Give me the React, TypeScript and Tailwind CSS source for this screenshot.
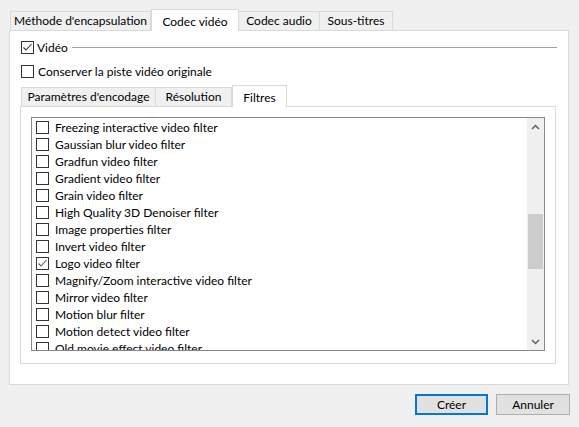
import React from 'react';

const filters = [
  { name: 'Freezing interactive video filter', checked: false },
  { name: 'Gaussian blur video filter', checked: false },
  { name: 'Gradfun video filter', checked: false },
  { name: 'Gradient video filter', checked: false },
  { name: 'Grain video filter', checked: false },
  { name: 'High Quality 3D Denoiser filter', checked: false },
  { name: 'Image properties filter', checked: false },
  { name: 'Invert video filter', checked: false },
  { name: 'Logo video filter', checked: true },
  { name: 'Magnify/Zoom interactive video filter', checked: false },
  { name: 'Mirror video filter', checked: false },
  { name: 'Motion blur filter', checked: false },
  { name: 'Motion detect video filter', checked: false },
  { name: 'Old movie effect video filter', checked: false },
];

const CheckBox: React.FC<{ checked?: boolean; dark?: boolean }> = ({ checked, dark }) => (
  <div className="w-[13px] h-[13px] border border-[#333333] bg-white flex items-center justify-center shrink-0">
    {checked && (
      <svg width="11" height="11" viewBox="0 0 11 11">
        <path d="M1.5 5.5 L4 8 L9.5 2" fill="none" stroke={dark ? '#333333' : '#5f5f5f'} strokeWidth="1.1" />
      </svg>
    )}
  </div>
);

const Tab: React.FC<{ label: string; width: string; active?: boolean }> = ({ label, width, active }) =>
  active ? (
    <div className={`${width} h-[22px] -mb-px relative z-10 bg-white border border-[#d9d9d9] border-b-0 flex items-start justify-center pt-[3px] whitespace-nowrap`}>
      {label}
    </div>
  ) : (
    <div className={`${width} h-[19px] bg-[#f0f0f0] border border-[#d9d9d9] border-b-0 flex items-center justify-center -ml-px first:ml-0 whitespace-nowrap`}>
      {label}
    </div>
  );

const App: React.FC = () => {
  return (
    <div
      className="w-[579px] h-[427px] bg-[#f0f0f0] pt-[10px] text-[12px] text-black overflow-hidden"
      style={{ fontFamily: 'Lato, "Noto Sans", sans-serif' }}
    >
      {/* top tabs */}
      <div className="flex items-end h-[20px] pl-[10px]">
        <Tab label="Méthode d'encapsulation" width="w-[141px]" />
        <Tab label="Codec vidéo" width="w-[88px]" active />
        <Tab label="Codec audio" width="w-[82px]" />
        <Tab label="Sous-titres" width="w-[74px]" />
      </div>

      <div className="ml-[9px] mr-[10px] h-[355px] bg-white border border-[#d9d9d9] pt-[10px] pl-[11px] pr-[11px]">
        <div className="flex items-center h-[13px]">
          <CheckBox checked dark />
          <span className="ml-[3px] leading-none">Vidéo</span>
          <div className="flex-1 h-px bg-[#a0a0a0] ml-[4px]" />
        </div>

        <div className="flex items-center h-[13px] mt-[11px]">
          <CheckBox />
          <span className="ml-[4px] leading-none">Conserver la piste vidéo originale</span>
        </div>

        {/* inner tabs */}
        <div className="flex items-end h-[21px] mt-[7px] pl-[1px] -ml-[1px]">
          <Tab label="Paramètres d'encodage" width="w-[135px]" />
          <Tab label="Résolution" width="w-[77px]" />
          <Tab label="Filtres" width="w-[55px]" active />
        </div>

        <div className="-ml-[1px] mr-[1px] h-[258px] border border-[#d9d9d9] pt-[10px] pl-[10px] pr-[10px]">
          <div className="h-[234px] border border-[#828790] bg-white flex">
            <div className="flex-1 overflow-hidden pt-[1px] pl-[4px]">
              {filters.map((f) => (
                <div key={f.name} className="h-[17px] flex items-center">
                  <CheckBox checked={f.checked} />
                  <span className="ml-[6px] leading-none whitespace-nowrap">{f.name}</span>
                </div>
              ))}
            </div>
            <div className="w-[17px] bg-[#f0f0f0] flex flex-col">
              <div className="h-[17px] flex items-center justify-center">
                <svg width="9" height="6" viewBox="0 0 9 6">
                  <path d="M1 5 L4.5 1.5 L8 5" fill="none" stroke="#606060" strokeWidth="1.5" />
                </svg>
              </div>
              <div className="flex-1 px-px">
                <div className="mt-[79px] h-[55px] bg-[#cdcdcd]" />
              </div>
              <div className="h-[17px] flex items-center justify-center">
                <svg width="9" height="6" viewBox="0 0 9 6">
                  <path d="M1 1 L4.5 4.5 L8 1" fill="none" stroke="#606060" strokeWidth="1.5" />
                </svg>
              </div>
            </div>
          </div>
        </div>
      </div>

      <div className="flex justify-end gap-[8px] mt-[9px] pr-[9px]">
        <button className="w-[73px] h-[21px] bg-[#e1e1e1] border-2 border-[#0078d7] flex items-center justify-center">
          Créer
        </button>
        <button className="w-[74px] h-[21px] bg-[#e1e1e1] border border-[#adadad] flex items-center justify-center">
          Annuler
        </button>
      </div>
    </div>
  );
};

export default App;
